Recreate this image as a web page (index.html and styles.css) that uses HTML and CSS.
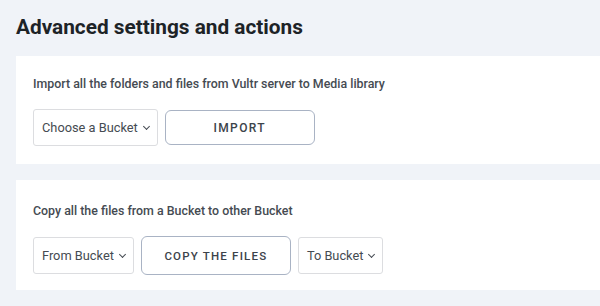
FILE: index.html
```html
<!DOCTYPE html>
<html lang="en">
<head>
  <meta charset="UTF-8">
  <title>Advanced settings</title>
  <link rel="stylesheet" href="styles.css">
</head>
<body>
  <h1>Advanced settings and actions</h1>

  <div class="card">
    <p class="card-title">Import all the folders and files from Vultr server to Media library</p>
    <div class="actions">
      <div class="select">Choose a Bucket <span class="caret"></span></div>
      <button class="btn btn-import">IMPORT</button>
    </div>
  </div>

  <div class="card">
    <p class="card-title">Copy all the files from a Bucket to other Bucket</p>
    <div class="actions">
      <div class="select">From Bucket <span class="caret"></span></div>
      <button class="btn btn-copy">COPY THE FILES</button>
      <div class="select">To Bucket <span class="caret"></span></div>
    </div>
  </div>
</body>
</html>
```

FILE: styles.css
```css
* {
  box-sizing: border-box;
}

body {
  margin: 0;
  padding: 15px 0 0 16px;
  background: #f0f3f8;
  font-family: Roboto, "Liberation Sans", sans-serif;
  color: #3c434a;
}

h1 {
  margin: 0 0 17px 0;
  font-size: 20.8px;
  font-weight: 700;
  color: #1d2327;
  line-height: 24px;
}

.card {
  background: #fff;
  padding: 20px 17px 17px 17px;
  margin-bottom: 16px;
  height: 108px;
}

.card + .card {
  height: 110px;
  padding-top: 23px;
}

.card-title {
  margin: 0 0 17px 0;
  font-size: 12.4px;
  font-weight: 500;
  line-height: 16px;
  color: #454b52;
}

.actions {
  display: flex;
  align-items: center;
  gap: 7px;
}

.select {
  height: 37px;
  display: flex;
  align-items: center;
  gap: 6px;
  padding: 0 8px 0 8px;
  border: 1px solid #dcdde0;
  border-radius: 3px;
  font-size: 12.8px;
  color: #454b52;
}

.caret {
  width: 5px;
  height: 5px;
  border-right: 1.2px solid #454b52;
  border-bottom: 1.2px solid #454b52;
  transform: rotate(45deg);
  margin-top: -3px;
}

.btn {
  height: 35px;
  width: 150px;
  border: 1px solid #a9b3c4;
  border-radius: 6px;
  background: #fff;
  font-family: inherit;
  font-size: 12px;
  font-weight: 500;
  letter-spacing: 1.4px;
  color: #3c434a;
}

.btn-copy {
  height: 39px;
  font-size: 11.5px;
  letter-spacing: 1.2px;
}
```
